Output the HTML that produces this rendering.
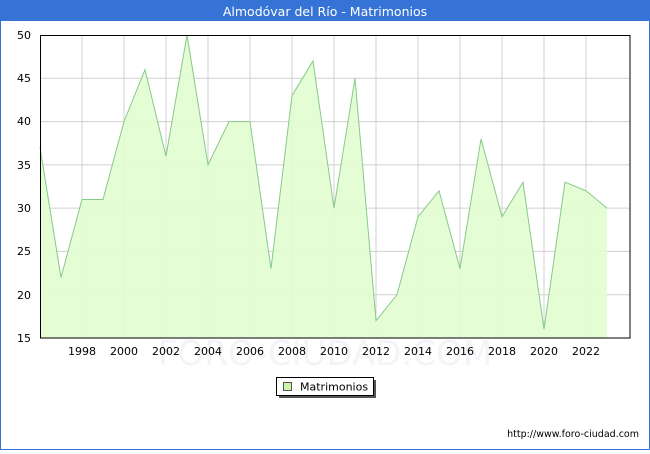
<!DOCTYPE html>
<html><head><meta charset="utf-8"><style>
body{margin:0;width:650px;height:450px;overflow:hidden;font-family:"DejaVu Sans","Liberation Sans",sans-serif;}
</style></head><body>
<svg width="650" height="450" xmlns="http://www.w3.org/2000/svg" font-family="DejaVu Sans, Liberation Sans, sans-serif">
<rect x="0" y="0" width="650" height="450" fill="#fff"/>
<rect x="0.5" y="0.5" width="649" height="449" fill="none" stroke="#3574d6" stroke-width="1"/>
<rect x="0" y="0" width="650" height="21" fill="#3574d6"/>
<text x="325" y="16" fill="#fff" font-size="12.5" text-anchor="middle">Almodóvar del Río - Matrimonios</text>
<text x="325" y="365" fill="#f3f3f8" font-size="34" text-anchor="middle">FORO-CIUDAD.COM</text>
<g stroke="#d0d0d0" stroke-width="1">
<line x1="40" y1="78.3" x2="630" y2="78.3"/><line x1="40" y1="121.6" x2="630" y2="121.6"/><line x1="40" y1="164.9" x2="630" y2="164.9"/><line x1="40" y1="208.1" x2="630" y2="208.1"/><line x1="40" y1="251.4" x2="630" y2="251.4"/><line x1="40" y1="294.7" x2="630" y2="294.7"/>
<line x1="82" y1="35" x2="82" y2="338"/><line x1="124" y1="35" x2="124" y2="338"/><line x1="166" y1="35" x2="166" y2="338"/><line x1="208" y1="35" x2="208" y2="338"/><line x1="250" y1="35" x2="250" y2="338"/><line x1="292" y1="35" x2="292" y2="338"/><line x1="334" y1="35" x2="334" y2="338"/><line x1="376" y1="35" x2="376" y2="338"/><line x1="418" y1="35" x2="418" y2="338"/><line x1="460" y1="35" x2="460" y2="338"/><line x1="502" y1="35" x2="502" y2="338"/><line x1="544" y1="35" x2="544" y2="338"/><line x1="586" y1="35" x2="586" y2="338"/>
</g>
<polygon fill="#e2fdd0" fill-opacity="0.9" stroke="none" points="40,338 40,147.5 61,277.4 82,199.5 103,199.5 124,121.6 145,69.6 166,156.2 187,35 208,164.9 229,121.6 250,121.6 271,268.7 292,95.6 313,61 334,208.1 355,78.3 376,320.7 397,294.7 418,216.8 439,190.8 460,268.7 481,138.9 502,216.8 523,182.2 544,329.3 565,182.2 586,190.8 607,208.1 607,338"/>
<polyline fill="none" stroke="#86c98a" stroke-width="1" points="40,147.5 61,277.4 82,199.5 103,199.5 124,121.6 145,69.6 166,156.2 187,35 208,164.9 229,121.6 250,121.6 271,268.7 292,95.6 313,61 334,208.1 355,78.3 376,320.7 397,294.7 418,216.8 439,190.8 460,268.7 481,138.9 502,216.8 523,182.2 544,329.3 565,182.2 586,190.8 607,208.1"/>
<rect x="40.5" y="35.5" width="589.5" height="302.5" fill="none" stroke="#000" stroke-width="1"/>
<g font-size="11" fill="#000" text-anchor="end">
<text x="31" y="39">50</text><text x="31" y="82">45</text><text x="31" y="125">40</text><text x="31" y="169">35</text><text x="31" y="212">30</text><text x="31" y="255">25</text><text x="31" y="299">20</text><text x="31" y="342">15</text>
</g>
<g font-size="11" fill="#000" text-anchor="middle">
<text x="82" y="355">1998</text><text x="124" y="355">2000</text><text x="166" y="355">2002</text><text x="208" y="355">2004</text><text x="250" y="355">2006</text><text x="292" y="355">2008</text><text x="334" y="355">2010</text><text x="376" y="355">2012</text><text x="418" y="355">2014</text><text x="460" y="355">2016</text><text x="502" y="355">2018</text><text x="544" y="355">2020</text><text x="586" y="355">2022</text>
</g>
<rect x="279" y="380" width="97" height="18" fill="#555"/>
<rect x="276.5" y="377.5" width="97" height="18" fill="#fff" stroke="#000"/>
<rect x="283.5" y="382.5" width="8" height="8" fill="#ccf5a8" stroke="#555"/>
<text x="300" y="390.5" font-size="11" fill="#000">Matrimonios</text>
<text x="639" y="437" font-size="9.5" fill="#000" text-anchor="end">http://www.foro-ciudad.com</text>
</svg>
</body></html>
